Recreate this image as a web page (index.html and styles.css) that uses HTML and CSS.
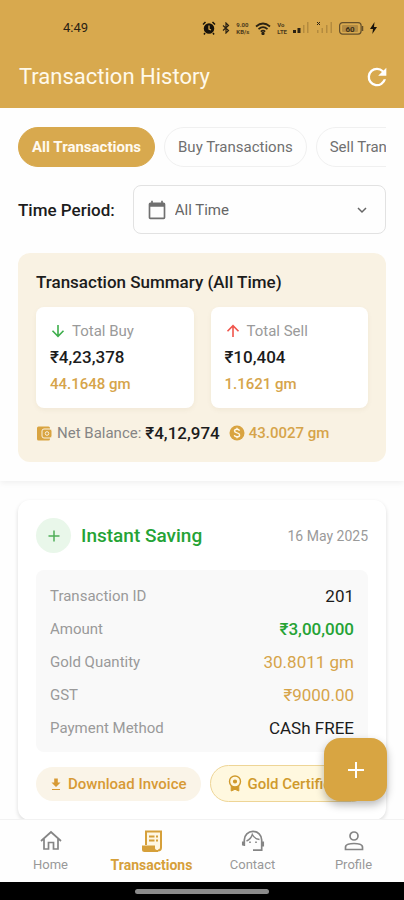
FILE: index.html
```html
<!DOCTYPE html>
<html lang="en">
<head>
<meta charset="utf-8">
<meta name="viewport" content="width=device-width, initial-scale=1">
<title>Transaction History</title>
<link rel="stylesheet" href="styles.css">
</head>
<body>
<header class="top">
  <div class="status">
    <span class="clock">4:49</span>
    <div class="status-icons">
      <svg width="14" height="14" viewBox="0 0 14 14"><circle cx="7" cy="7.500" r="4" fill="#17120a" stroke="#17120a" stroke-width="2.500"/><path d="M1 3.500 3.500 1M13 3.500 10.500 1M3 12l-1 1.500M11 12l1 1.500" stroke="#17120a" stroke-width="1.500"/><path d="M7 4.500V8l2 1" stroke="#d8a94e" stroke-width="1.300" fill="none"/></svg>
      <svg width="8" height="12" viewBox="0 0 8 12" fill="none" stroke="#2b2213" stroke-width="1.200"><path d="M1 3.500 6.500 8.500 4 11V1l2.500 2.500L1 8.500"/></svg>
      <span class="tiny"><span>9.00</span><span>KB/s</span></span>
      <svg width="16" height="13" viewBox="0 0 16 13" fill="none" stroke="#2b2213" stroke-width="1.700"><path d="M1 4.500Q8-1.500 15 4.500M3.500 7.200Q8 3.200 12.500 7.200M5.800 9.600Q8 7.800 10.200 9.600"/><circle cx="8" cy="11.500" r=".8" fill="#2b2213"/></svg>
      <span class="tiny"><span>Vo</span><span>LTE</span></span>
      <svg width="17" height="12" viewBox="0 0 17 12"><path fill="#2b2213" d="M0 8h3v3H0zM4.500 6h3v5h-3z"/><path fill="#b48b3f" d="M10 3h1.500v8H10zM14 0h1.500v11H14z"/></svg>
      <svg width="17" height="12" viewBox="0 0 17 12"><path d="m1 0 3 3M4 0 1 3" stroke="#2b2213"/><path fill="#b48b3f" d="M1 8h1.500v3H1zM5.500 6H7v5H5.500zM10 3h1.500v8H10zM14.500 0H16v11h-1.500z"/></svg>
      <svg width="25" height="13" viewBox="0 0 25 13"><rect x=".6" y=".6" width="21.500" height="11.500" rx="3" fill="none" stroke="#66502a" stroke-width="1.200"/><path d="M23.500 4v5" stroke="#66502a" stroke-width="1.500"/><rect x="3" y="3" width="16" height="7" rx="1" fill="#b38b43"/><text x="11" y="9.500" text-anchor="middle" font-size="8" font-weight="700" fill="#3d2f17">60</text></svg>
      <svg width="7" height="12" viewBox="0 0 7 12"><path d="M4.500 0 0 7h3L2.300 12 7 5H4z" fill="#17120a"/></svg>
    </div>
  </div>
  <div class="titlebar">
    <h1>Transaction History</h1>
    <button class="icon-button" aria-label="Refresh"><svg width="28" height="28" viewBox="0 0 24 24" fill="#fff"><path d="M17.650 6.350A7.960 7.960 0 0 0 12 4a8 8 0 1 0 7.730 10h-2.080A6 6 0 1 1 12 6c1.660 0 3.140.69 4.220 1.780L13 11h7V4z"/></svg></button>
  </div>
</header>

<main class="content">
  <section class="overview">
    <div class="chips">
      <button class="chip chip-active">All Transactions</button>
      <button class="chip">Buy Transactions</button>
      <button class="chip">Sell Transactions</button>
    </div>
    <div class="period">
      <label for="period">Time Period:</label>
      <div class="select-box">
        <svg width="20" height="20" viewBox="0 0 24 24" fill="#707070"><path d="M20 3h-1V1h-2v2H7V1H5v2H4a2 2 0 0 0-2 2v16c0 1.100.9 2 2 2h16a2 2 0 0 0 2-2V5a2 2 0 0 0-2-2m0 18H4V8h16z"/></svg>
        <select id="period"><option>All Time</option></select>
        <svg width="12" height="12" viewBox="0 0 12 12" fill="none" stroke="#666" stroke-width="1.500"><path d="m2 4 4 4 4-4"/></svg>
      </div>
    </div>
    <div class="summary">
      <h2>Transaction Summary (All Time)</h2>
      <div class="totals">
        <div class="total">
          <div class="total-label"><svg width="16" height="16" viewBox="0 0 16 16" fill="none" stroke="#3eae4c" stroke-width="1.600"><path d="M8 2v11M2.500 7.800 8 13.300l5.500-5.500"/></svg>Total Buy</div>
          <div class="total-value">₹4,23,378</div>
          <div class="total-gold">44.1648 gm</div>
        </div>
        <div class="total">
          <div class="total-label"><svg width="16" height="16" viewBox="0 0 16 16" fill="none" stroke="#f0554c" stroke-width="1.600"><path d="M8 14V3M2.500 8.200 8 2.700l5.500 5.500"/></svg>Total Sell</div>
          <div class="total-value">₹10,404</div>
          <div class="total-gold">1.1621 gm</div>
        </div>
      </div>
      <div class="net">
        <svg width="17" height="17" viewBox="0 0 17 17"><rect x="1" y="1.500" width="13" height="14" rx="1.500" fill="#d9a441"/><rect x="6" y="4" width="10" height="9" rx="2" fill="#d9a441" stroke="#faf2e2"/><circle cx="11" cy="8.500" r="1.800" fill="#d9a441" stroke="#faf2e2"/></svg>
        <span class="net-label">Net Balance:</span>
        <strong class="net-value">₹4,12,974</strong>
        <svg class="coin" width="16" height="16" viewBox="0 0 16 16"><circle cx="8" cy="8" r="7.500" fill="#d9a441"/><path d="M10.500 5.700C10.200 4.700 9.300 4.300 8 4.300c-1.500 0-2.500.7-2.500 1.800C5.500 8.500 10.600 7.300 10.600 9.900c0 1.200-1.100 1.900-2.600 1.900-1.400 0-2.500-.6-2.700-1.700M8 2.800v1.500M8 11.800v1.500" fill="none" stroke="#fff8e8" stroke-width="1.400"/></svg>
        <span class="total-gold">43.0027 gm</span>
      </div>
    </div>
  </section>

  <section class="list">
    <article class="card">
      <div class="card-head">
        <span class="badge"><svg width="12" height="12" viewBox="0 0 12 12" stroke="#4fae58" stroke-width="1.500"><path d="M6 .5v11M.5 6h11"/></svg></span>
        <h3>Instant Saving</h3>
        <time datetime="2025-05-16">16 May 2025</time>
      </div>
      <dl class="details">
        <div><dt>Transaction ID</dt><dd>201</dd></div>
        <div><dt>Amount</dt><dd class="green">₹3,00,000</dd></div>
        <div><dt>Gold Quantity</dt><dd class="gold">30.8011 gm</dd></div>
        <div><dt>GST</dt><dd class="gold">₹9000.00</dd></div>
        <div><dt>Payment Method</dt><dd>CASh FREE</dd></div>
      </dl>
      <div class="actions">
        <button class="pill"><svg width="12" height="14" viewBox="0 0 12 14" fill="#d79a35"><path d="M4.200 1.500h3.600v4H10.500L6 10 1.500 5.500h2.700z"/><path d="M2 12h8v1H2z"/></svg>Download Invoice</button>
        <button class="pill pill-outlined"><svg width="14" height="17" viewBox="0 0 14 17" fill="none" stroke="#d09a2c" stroke-width="1.400"><circle cx="7" cy="6.500" r="5.500"/><circle cx="7" cy="6.500" r="1.400" fill="#d09a2c"/><path d="M3.200 11v5L7 14.300l3.800 1.700v-5L7 12.500z" fill="#d09a2c" stroke-width="1"/></svg>Gold Certificate</button>
      </div>
    </article>
  </section>
</main>

<footer class="bottom">
  <button class="fab" aria-label="Add"><svg width="18" height="18" viewBox="0 0 18 18" stroke="#fff" stroke-width="2"><path d="M9 1v16M1 9h16"/></svg></button>
  <nav class="nav">
    <a href="#home"><svg width="24" height="24" viewBox="0 0 24 24" fill="none" stroke="#858585" stroke-width="1.700"><path d="M2 12 12 3l10 9M5 10v10h4.500v-6.500h5V20H19V10"/></svg>Home</a>
    <a href="#transactions" class="active"><svg width="24" height="24" viewBox="0 0 24 24"><path d="M6 16V2.500h15V18.500q0 3-3 3" fill="#fff7e3" stroke="#d6a03a" stroke-width="2"/><path d="M2 16.500h13V19q0 2 3 2v2H4.500Q2 23 2 20.500z" fill="#d6a03a"/><path d="M9 7.500h5.500M9 11.500h5.500M16 7.500h2M16 11.500h2" stroke="#d6a03a" stroke-width="2"/></svg>Transactions</a>
    <a href="#contact"><svg width="24" height="24" viewBox="0 0 24 24" fill="none" stroke="#858585" stroke-width="1.700"><path d="M3.300 17V11a8.700 8.700 0 0 1 17.400 0v10.200H12M1.800 12.500v4M22.200 12.500v5"/><path d="M5.500 12Q10 10 11.300 5.500 13.500 10 18.500 10.500" stroke-width="1.400"/><circle cx="9" cy="13.200" r=".5" fill="#858585" stroke-width="1"/><circle cx="15" cy="13.200" r=".5" fill="#858585" stroke-width="1"/></svg>Contact</a>
    <a href="#profile"><svg width="24" height="24" viewBox="0 0 24 24" fill="none" stroke="#858585" stroke-width="1.700"><circle cx="12" cy="7" r="4"/><path d="M3.500 20.500v-2.300c0-2.500 4.500-3.700 8.500-3.700s8.500 1.200 8.500 3.700v2.300z"/></svg>Profile</a>
  </nav>
  <div class="gesture"><span></span></div>
</footer>
</body>
</html>
```
FILE: styles.css
```css
* { box-sizing: border-box; }

body {
  margin: 0;
  height: 100vh;
  display: flex;
  flex-direction: column;
  overflow: hidden;
  background: #fefefe;
  color: #1c1c1c;
  font-family: Roboto, "Liberation Sans", sans-serif;
  font-size: 15px;
}

h1, h2, h3, dl, dd { margin: 0; }
button, select { font: inherit; border: 0; background: none; padding: 0; }
svg { flex: none; display: block; }

.top { background: #d8a94e; }

.status {
  display: flex;
  align-items: center;
  justify-content: space-between;
  padding: 20px 27px 10px 63px;
  line-height: 16px;
}
.clock { color: #2b2213; font-size: 13px; }
.status-icons { display: flex; align-items: center; gap: 6px; }
.tiny {
  display: grid;
  font-size: 6px;
  line-height: 7px;
  font-weight: 700;
  color: #4d3c1d;
}

.titlebar {
  display: flex;
  align-items: center;
  justify-content: space-between;
  padding: 16px 13px 16px 19px;
}
h1 { color: #fff9ea; font-size: 22px; font-weight: 400; line-height: 30px; }
.icon-button { line-height: 0; }

.content { flex: 1; min-height: 0; overflow: hidden; }

.overview {
  position: relative;
  padding: 19px 18px;
  background: #fefefe;
  box-shadow: 0 2px 6px rgba(0, 0, 0, 0.06);
}

.chips { display: flex; gap: 9px; overflow: hidden; }
.chip {
  flex: none;
  height: 40px;
  padding: 0 13px;
  border: 1px solid #f0f0f0;
  border-radius: 20px;
  color: #707070;
}
.chip-active { background: #d8a94e; border-color: #d8a94e; color: #fffaf0; font-weight: 700; }

.period { display: flex; align-items: center; gap: 18px; margin-top: 18px; }
.period label { font-size: 17px; font-weight: 500; }
.select-box {
  flex: 1;
  display: flex;
  align-items: center;
  gap: 8px;
  height: 49px;
  padding: 0 17px 0 13px;
  border: 1px solid #e2e2e2;
  border-radius: 8px;
}
.select-box select { flex: 1; min-width: 0; height: 100%; appearance: none; color: #666; }

.summary { margin-top: 19px; padding: 18px; border-radius: 12px; background: #f9f2e3; }
h2 { font-size: 17px; font-weight: 500; line-height: 22px; }
.totals { display: grid; grid-template-columns: 1fr 1fr; gap: 17px; margin-top: 14px; }
.total {
  padding: 14px;
  border-radius: 8px;
  background: #fff;
  box-shadow: 0 2px 5px rgba(120, 90, 30, 0.06);
}
.total-label { display: flex; align-items: center; gap: 6px; color: #9a9a9a; line-height: 20px; }
.total-value { margin-top: 5px; font-size: 17px; font-weight: 500; line-height: 22px; }
.total-gold { color: #d6a44a; font-weight: 500; line-height: 20px; }
.total .total-gold { margin-top: 6px; }
.net { display: flex; align-items: center; gap: 4px; margin-top: 14px; line-height: 22px; }
.net-label { color: #858585; }
.net-value { font-size: 17px; font-weight: 500; }
.coin { margin-left: 5px; }

.list { padding: 19px 18px 0; }
.card {
  padding: 18px;
  border-radius: 12px;
  background: #fff;
  box-shadow: 0 2px 4px rgba(0, 0, 0, 0.14);
}
.card-head { display: flex; align-items: center; gap: 10px; }
.badge {
  display: grid;
  place-items: center;
  width: 35px;
  height: 35px;
  border-radius: 50%;
  background: #e9f7ea;
}
h3 { flex: 1; color: #25a335; font-size: 19px; font-weight: 500; line-height: 24px; }
time { color: #9a9a9a; font-size: 14px; }

.details {
  display: grid;
  gap: 9px;
  margin-top: 17px;
  padding: 14px 14px 12px;
  border-radius: 8px;
  background: #f9f9f9;
}
.details div { display: flex; justify-content: space-between; line-height: 24px; }
dt { color: #9a9a9a; }
dd { font-size: 17px; }
.details .green { color: #25a335; font-weight: 500; }
.details .gold { color: #d6a44a; }

.actions { display: flex; align-items: center; gap: 9px; margin-top: 13px; overflow: hidden; }
.pill {
  flex: none;
  display: flex;
  align-items: center;
  gap: 6px;
  height: 34px;
  padding: 0 14px;
  border-radius: 17px;
  background: #faf4e8;
  color: #d79a35;
  font-weight: 500;
}
.pill-outlined {
  height: 37px;
  padding: 0 17px;
  border: 1px solid #eed596;
  border-radius: 19px;
  background: #fff8df;
  color: #d09a2c;
}

.bottom { position: relative; background: #fefefe; }
.fab {
  position: absolute;
  right: 17px;
  bottom: 99px;
  display: grid;
  place-items: center;
  width: 63px;
  height: 63px;
  border-radius: 16px;
  background: #d8a542;
  box-shadow: 0 4px 8px rgba(0, 0, 0, 0.28);
}
.nav {
  display: grid;
  grid-template-columns: repeat(4, 1fr);
  padding: 9px 0;
  border-top: 1px solid #f2f2f2;
}
.nav a {
  display: flex;
  flex-direction: column;
  align-items: center;
  gap: 4px;
  color: #999;
  font-size: 13px;
  line-height: 16px;
  text-decoration: none;
}
.nav .active { color: #d6a03a; font-size: 14px; font-weight: 700; }
.gesture { display: flex; justify-content: center; padding: 7px 0 6px; background: #000; }
.gesture span { width: 33%; height: 5px; border-radius: 3px; background: #8a8a8a; }
```
